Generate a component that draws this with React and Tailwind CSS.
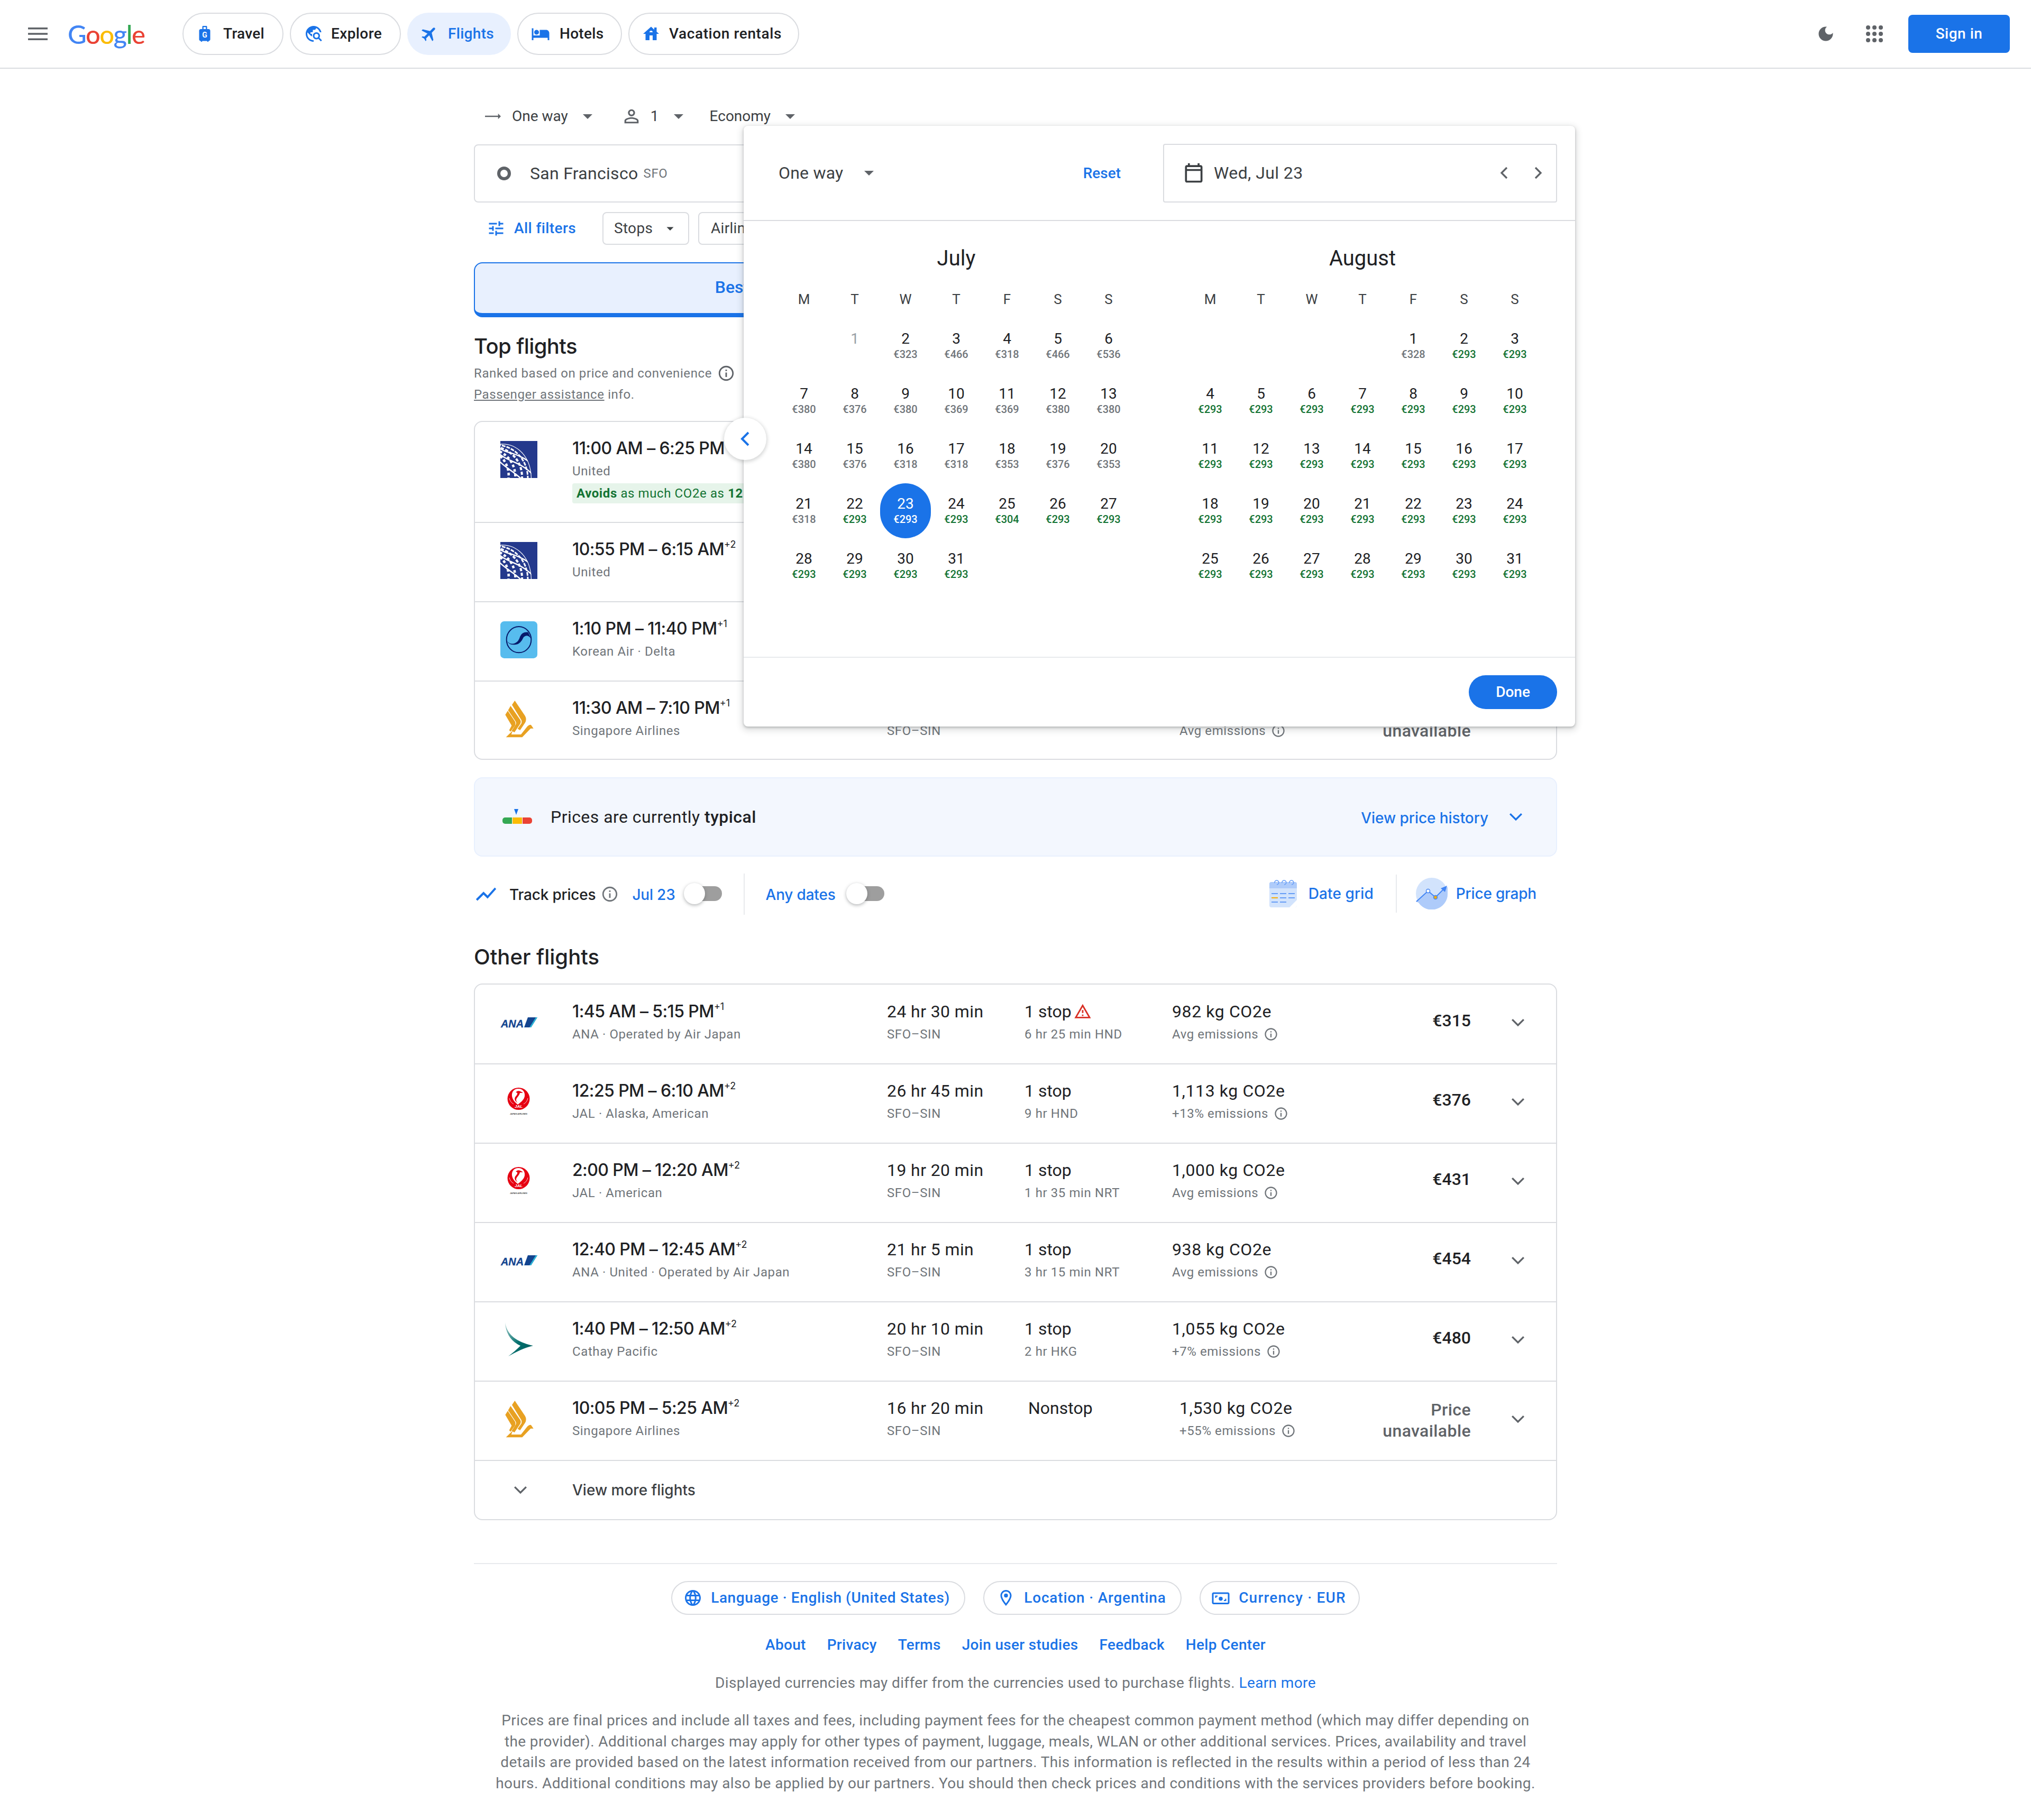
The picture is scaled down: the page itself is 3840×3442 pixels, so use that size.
import React from "react";

const Icon = ({ d, className = "", fill = "currentColor" }) => (
  <svg viewBox="0 0 24 24" className={className} fill={fill}>
    <path d={d} />
  </svg>
);

const paths = {
  luggage: "M17 6h-2V3c0-.55-.45-1-1-1h-4c-.55 0-1 .45-1 1v3H7c-1.1 0-2 .9-2 2v11c0 1.1.9 2 2 2 0 .55.45 1 1 1s1-.45 1-1h6c0 .55.45 1 1 1s1-.45 1-1c1.1 0 2-.9 2-2V8c0-1.1-.9-2-2-2zm-6.5 0V3.5h3V6h-3z",
  explore: "M19.3 16.9c.4-.7.7-1.5.7-2.4 0-2.5-2-4.5-4.5-4.5S11 12 11 14.5s2 4.5 4.5 4.5c.9 0 1.7-.3 2.4-.7l3.2 3.2 1.4-1.4-3.2-3.2zm-3.8.1c-1.4 0-2.5-1.1-2.5-2.5s1.1-2.5 2.5-2.5 2.5 1.1 2.5 2.5-1.1 2.5-2.5 2.5zM12 20v2C6.48 22 2 17.52 2 12S6.48 2 12 2c4.84 0 8.87 3.44 9.8 8h-2.07c-.64-2.46-2.4-4.47-4.73-5.41V5c0 1.1-.9 2-2 2h-2v2c0 .55-.45 1-1 1H8v2h2v3H9l-4.79-4.79C4.08 10.79 4 11.38 4 12c0 4.41 3.59 8 8 8z",
  flight: "M21 16v-2l-8-5V3.5c0-.83-.67-1.5-1.5-1.5S10 2.67 10 3.5V9l-8 5v2l8-2.5V19l-2 1.5V22l3.5-1 3.5 1v-1.5L13 19v-5.5l8 2.5z",
  hotel: "M7 13c1.66 0 3-1.34 3-3S8.66 7 7 7s-3 1.34-3 3 1.34 3 3 3zm12-6h-8v7H3V5H1v15h2v-3h18v3h2v-9c0-2.21-1.79-4-4-4z",
  house: "M19 9.3V4h-3v2.6L12 3 2 12h3v8h5v-6h4v6h5v-8h3l-3-2.7zm-9 .7c0-1.1.9-2 2-2s2 .9 2 2h-4z",
  moon: "M12 3c-4.97 0-9 4.03-9 9s4.03 9 9 9 9-4.03 9-9c0-.46-.04-.92-.1-1.36-.98 1.37-2.58 2.26-4.4 2.26-2.98 0-5.4-2.42-5.4-5.4 0-1.81.89-3.42 2.26-4.4-.44-.06-.9-.1-1.36-.1z",
  person: "M12 5.9c1.16 0 2.1.94 2.1 2.1s-.94 2.1-2.1 2.1S9.9 9.16 9.9 8s.94-2.1 2.1-2.1m0 9c2.97 0 6.1 1.46 6.1 2.1v1.1H5.9V17c0-.64 3.13-2.1 6.1-2.1M12 4C9.79 4 8 5.79 8 8s1.79 4 4 4 4-1.79 4-4-1.79-4-4-4zm0 9c-2.67 0-8 1.34-8 4v3h16v-3c0-2.66-5.33-4-8-4z",
  tune: "M3 17v2h6v-2H3zM3 5v2h10V5H3zm10 16v-2h8v-2h-8v-2h-2v6h2zM7 9v2H3v2h4v2h2V9H7zm14 4v-2H11v2h10zm-6-4h2V7h4V5h-4V3h-2v6z",
  info: "M11 7h2v2h-2zm0 4h2v6h-2zm1-9C6.48 2 2 6.48 2 12s4.48 10 10 10 10-4.48 10-10S17.52 2 12 2zm0 18c-4.41 0-8-3.59-8-8s3.59-8 8-8 8 3.59 8 8-3.59 8-8 8z",
  warning: "M12 5.99L19.53 19H4.47L12 5.99M12 2L1 21h22L12 2zm1 14h-2v2h2v-2zm0-6h-2v4h2v-4z",
  chart: "M3.5 18.49l6-6.01 4 4L22 6.92l-1.41-1.41-7.09 7.97-4-4L2 16.99z",
  globe: "M11.99 2C6.47 2 2 6.48 2 12s4.47 10 9.99 10C17.52 22 22 17.52 22 12S17.52 2 11.99 2zm6.93 6h-2.95c-.32-1.25-.78-2.45-1.38-3.56 1.84.63 3.37 1.91 4.33 3.56zM12 4.04c.83 1.2 1.48 2.53 1.91 3.96h-3.82c.43-1.43 1.08-2.76 1.91-3.96zM4.26 14C4.1 13.36 4 12.69 4 12s.1-1.36.26-2h3.38c-.08.66-.14 1.32-.14 2s.06 1.34.14 2H4.26zm.82 2h2.95c.32 1.25.78 2.45 1.38 3.56-1.84-.63-3.37-1.9-4.33-3.56zm2.95-8H5.08c.96-1.66 2.49-2.93 4.33-3.56C8.81 5.55 8.35 6.75 8.03 8zM12 19.96c-.83-1.2-1.48-2.53-1.91-3.96h3.82c-.43 1.43-1.08 2.76-1.91 3.96zM14.34 14H9.66c-.09-.66-.16-1.32-.16-2s.07-1.35.16-2h4.68c.09.65.16 1.32.16 2s-.07 1.34-.16 2zm.25 5.56c.6-1.11 1.06-2.31 1.38-3.56h2.95c-.96 1.65-2.49 2.93-4.33 3.56zM16.36 14c.08-.66.14-1.32.14-2s-.06-1.34-.14-2h3.38c.16.64.26 1.31.26 2s-.1 1.36-.26 2h-3.38z",
  pin: "M12 2C8.13 2 5 5.13 5 9c0 5.25 7 13 7 13s7-7.75 7-13c0-3.87-3.13-7-7-7zm0 2c2.76 0 5 2.24 5 5 0 2.88-2.88 7.19-5 9.88C9.92 16.21 7 11.85 7 9c0-2.76 2.24-5 5-5zm0 2.5A2.5 2.5 0 1 0 12 11.5 2.5 2.5 0 0 0 12 6.5z",
  currency: "M3 5h18c1.1 0 2 .9 2 2v11c0 1.1-.9 2-2 2H3c-1.1 0-2-.9-2-2V7c0-1.1.9-2 2-2zm0 2v11h18V7H3zm9 3.5a2.5 2.5 0 1 1 0 5 2.5 2.5 0 0 1 0-5zM5 9h3v1.5H6.5V12H5V9zm14 7h-3v-1.5h1.5V13H19v3z",
  calendar: "M19 4h-1V2h-2v2H8V2H6v2H5c-1.1 0-2 .9-2 2v14c0 1.1.9 2 2 2h14c1.1 0 2-.9 2-2V6c0-1.1-.9-2-2-2zm0 16H5V10h14v10zm0-12H5V6h14v2z",
  arrow: "M2 11.2h16.5V8.5L22 12l-3.5 3.5v-2.7H2z",
};

const Caret = ({ className = "" }) => (
  <svg viewBox="0 0 20 10" className={`w-[18px] h-[9px] ${className}`} fill="currentColor">
    <path d="M0 0h20L10 10z" />
  </svg>
);

const Chevron = ({ className = "", up = false }) => (
  <svg viewBox="0 0 24 24" className={className} fill="none" stroke="currentColor" strokeWidth="2">
    <path d={up ? "M6 15l6-6 6 6" : "M5.5 8.5 12 15l6.5-6.5"} />
  </svg>
);

const GS = "font-['Inter',sans-serif]";

const UnitedLogo = () => (
  <svg viewBox="0 0 70 70" className="w-[70px] h-[70px]">
    <defs>
      <clipPath id="unitedGlobe">
        <path d="M0 5.5C28 3 58 25 59 70H0z" />
      </clipPath>
    </defs>
    <rect width="70" height="70" fill="#24398c" />
    <g clipPath="url(#unitedGlobe)" fill="none" stroke="#fff">
      <path d="M0 5.5C28 3 58 25 59 70" strokeWidth="2.4" />
      <path d="M-6 7C26 10 52 34 52 72" strokeWidth="3" strokeDasharray="7 2" />
      <path d="M-8 11C20 16 43 38 41 74" strokeWidth="4" strokeDasharray="6 3" />
      <path d="M-10 17C12 22 31 44 28 74" strokeWidth="4.5" strokeDasharray="5 4" />
      <path d="M-8 24C6 30 19 50 15 74" strokeWidth="4.5" strokeDasharray="5 4" />
      <path d="M-4 12C10 24 28 20 56 40" strokeWidth="2.4" />
      <path d="M-4 22C10 38 36 38 60 62" strokeWidth="2.4" />
      <path d="M-4 36C8 50 24 56 42 74" strokeWidth="2.4" />
    </g>
  </svg>
);

const KoreanLogo = () => (
  <svg viewBox="48 42 210 210" className="w-[70px] h-[70px]">
    <rect x="48" y="42" width="210" height="210" rx="22" fill="#57bcee" />
    <ellipse cx="153" cy="146" rx="70" ry="74" fill="none" stroke="#071a6b" strokeWidth="6" />
    <path d="M84 152Q105 178 132 166Q152 156 160 128Q172 100 206 104L222 140Q200 112 180 132Q162 172 136 174Q100 180 84 152Z" fill="#071a6b" />
  </svg>
);

const SingaporeLogo = () => (
  <svg viewBox="48 492 210 210" className="w-[70px] h-[70px]" fill="#e8a122">
    <path d="M130 492L188 578Q200 598 188 618L160 660L146 652L168 620Q172 606 162 594L114 516Z" />
    <path d="M106 522L160 600Q168 612 160 625L128 672L112 664L136 626Q140 616 132 606L92 547Z" />
    <path d="M90 550L132 612Q136 622 132 632L106 668L98 660L112 634L76 572Z" />
    <path d="M80 700L118 662L110 684L165 684L200 640Q212 626 222 630L236 650L220 650L172 700Z" />
  </svg>
);

const AnaLogo = () => (
  <svg viewBox="0 0 70 70" className="w-[70px] h-[70px]">
    <text x="1" y="44" fontFamily="'Liberation Sans',sans-serif" fontStyle="italic" fontWeight="700" fontSize="21" textLength="43" lengthAdjust="spacingAndGlyphs" fill="#13448f" stroke="#13448f" strokeWidth="0.3">ANA</text>
    <path d="M52 25H70L58 44H45Z" fill="#13448f" />
    <path d="M67 25h3L58 44h-3z" fill="#29b6d8" />
  </svg>
);

const JalLogo = () => (
  <svg viewBox="0 0 70 70" className="w-[70px] h-[70px]">
    <circle cx="34.5" cy="29" r="21" fill="#e60012" />
    <path d="M34 10C26 10 21 16 22 24C23 31 28 36 33 40C38 36 45 31 46 24C47 16 42 10 34 10Z" fill="#fff" />
    <path d="M30 16C33 13 38 14 43 18L37 18C36 22 34 24 31 28C29 31 30 34 33 37C28 34 26 30 28 26C30 23 33 21 32 18C31 17 30 17 29 17Z" fill="#e60012" />
    <path d="M17 28c1 5 4 9 8 11M52 28c-1 5-4 9-8 11" stroke="#fff" strokeWidth="0.8" fill="none" />
    <text x="34.5" y="46" textAnchor="middle" fontFamily="'Liberation Sans',sans-serif" fontStyle="italic" fontWeight="700" fontSize="8" fill="#fff">JAL</text>
    <text x="34.5" y="59" textAnchor="middle" fontFamily="'Liberation Sans',sans-serif" fontStyle="italic" fontWeight="700" fontSize="4" fill="#444">JAPAN AIRLINES</text>
  </svg>
);

const CathayLogo = () => (
  <svg viewBox="0 0 70 70" className="w-[70px] h-[70px]">
    <defs>
      <linearGradient id="cathayWing" x1="0" y1="0" x2="1" y2="1">
        <stop offset="0" stopColor="#a6cfcd" />
        <stop offset="0.55" stopColor="#006e6c" />
        <stop offset="1" stopColor="#005a5c" />
      </linearGradient>
    </defs>
    <path d="M9 2C12 22 26 38 62 46C44 50 30 58 15 66C26 58 34 50 38 46C20 38 10 22 9 2Z" fill="url(#cathayWing)" />
  </svg>
);

const logos = {
  united: UnitedLogo,
  korean: KoreanLogo,
  singapore: SingaporeLogo,
  ana: AnaLogo,
  jal: JalLogo,
  cathay: CathayLogo,
};

const navItems = [
  { label: "Travel", icon: paths.luggage, pill: "w-[191px] pl-[22px] tracking-[0.3px]", gap: "gap-[17px]", active: false },
  { label: "Explore", icon: paths.explore, pill: "w-[210px] pl-[25px] tracking-[0.4px]", gap: "gap-[15px]", active: false },
  { label: "Flights", icon: paths.flight, pill: "w-[196px] pl-[24px] tracking-[0.3px]", gap: "gap-[17px]", active: true },
  { label: "Hotels", icon: paths.hotel, pill: "w-[198px] pl-[24px] tracking-[0.3px]", gap: "gap-[18px]", active: false },
  { label: "Vacation rentals", icon: paths.house, pill: "w-[323px] pl-[23px] tracking-[0.6px]", gap: "gap-[16px]", active: false },
];

const Header = () => (
  <header className="h-[130px] border-b-2 border-[#dadce0] flex items-center pr-[40px]">
    <svg viewBox="0 0 37 24" className="w-[37px] h-[24px] ml-[53px] text-[#5f6368]" fill="currentColor">
      <path d="M0 0h37v3.5H0zM0 10.2h37v3.5H0zM0 20.5h37V24H0z" />
    </svg>
    <div className="ml-[38px] w-[146px] text-[49px] leading-[60px] tracking-[-1.5px] font-['Lato',sans-serif] font-medium">
      <span className="text-[#4285f4]">G</span>
      <span className="text-[#ea4335]">o</span>
      <span className="text-[#fbbc05]">o</span>
      <span className="text-[#4285f4]">g</span>
      <span className="text-[#34a853]">l</span>
      <span className="text-[#ea4335]">e</span>
    </div>
    <nav className="ml-[71px] flex gap-[12px]">
      {navItems.map((item) => (
        <div
          key={item.label}
          className={`h-[80px] rounded-full flex items-center text-[28px] font-medium ${item.pill} ${item.gap} ${
            item.active ? "bg-[#e8f0fe] text-[#1a73e8]" : "border-2 border-[#dadce0] text-[#202124]"
          }`}
        >
          <span className="relative w-[36px] h-[36px] shrink-0 flex items-center justify-center text-[#1a73e8]">
            <Icon d={item.icon} className={`w-[36px] h-[36px] shrink-0 ${item.active ? "rotate-45" : ""}`} />
            {item.label === "Travel" && (
              <span className="absolute top-[12px] left-0 w-[36px] text-center text-[14px] leading-[16px] font-bold text-white tracking-normal">G</span>
            )}
          </span>
          {item.label}
        </div>
      ))}
    </nav>
    <div className="ml-auto flex items-center">
      <Icon d={paths.moon} className="w-[36px] h-[36px] text-[#5f6368]" />
      <svg viewBox="0 0 32 32" className="ml-[58px] w-[32px] h-[32px] text-[#5f6368]" fill="currentColor">
        {[4, 16, 28].map((y) =>
          [4, 16, 28].map((x) => <circle key={`${x}-${y}`} cx={x} cy={y} r="4" />)
        )}
      </svg>
      <div className="ml-[48px] w-[192px] h-[72px] rounded-[8px] bg-[#1a73e8] text-white text-[28px] font-medium tracking-[0.5px] flex items-center justify-center">
        Sign in
      </div>
    </div>
  </header>
);

const SearchControls = () => (
  <>
    <div className="h-[58px] pt-[2px] flex items-center text-[28px] text-[#3c4043]">
      <Icon d={paths.arrow} className="ml-[18px] w-[36px] h-[36px] text-[#5f6368]" />
      <span className="ml-[18px]">One way</span>
      <Caret className="ml-[28px] text-[#5f6368]" />
      <Icon d={paths.person} className="ml-[54px] w-[40px] h-[40px] text-[#5f6368]" />
      <span className="ml-[16px]">1</span>
      <Caret className="ml-[28px] text-[#5f6368]" />
      <span className="ml-[50px]">Economy</span>
      <Caret className="ml-[28px] text-[#5f6368]" />
    </div>
    <div className="mt-[25px] h-[110px] border-2 border-[#dadce0] rounded-[8px] flex items-center">
      <span className="ml-[42px] w-[26px] h-[26px] rounded-full border-[6px] border-[#5f6368]" />
      <span className="ml-[36px] text-[32px] tracking-[0.3px] text-[#3c4043]">San Francisco</span>
      <span className="ml-[10px] text-[24px] tracking-[0.6px] text-[#70757a]">SFO</span>
    </div>
    <div className="mt-[17px] h-[64px] flex items-center">
      <Icon d={paths.tune} className="ml-[24px] w-[36px] h-[36px] text-[#1a73e8]" />
      <span className="ml-[16px] text-[28px] font-medium tracking-[0.4px] text-[#1a73e8]">All filters</span>
      <div className="ml-[50px] w-[164px] h-[62px] border-2 border-[#dadce0] rounded-[8px] flex items-center pl-[20px] text-[28px] tracking-[0.3px] text-[#3c4043]">
        Stops
        <Caret className="ml-[24px] scale-75 text-[#3c4043]" />
      </div>
      <div className="ml-[17px] w-[164px] h-[62px] border-2 border-[#dadce0] rounded-[8px] flex items-center pl-[22px] text-[28px] tracking-[0.3px] text-[#3c4043]">
        Airlines
      </div>
    </div>
    <div className="mt-[32px] w-[1024px] h-[104px] bg-[#e8f0fe] border-2 border-b-[8px] border-[#1a73e8] rounded-[16px] flex items-center justify-center pb-[4px] text-[32px] font-medium text-[#1a73e8] pr-[48px]">
      Best
    </div>
  </>
);

const FlightRow = ({ f, first, firstClass }) => {
  const Logo = logos[f.logo];
  const height = f.height || "h-[150px]";
  return (
    <div className={`flex items-start ${height} ${first ? firstClass : "border-t-2 border-[#dadce0] pt-[30px]"}`}>
      <div className="ml-[48px] mt-[6px] w-[70px] h-[70px] shrink-0">
        <Logo />
      </div>
      <div className="ml-[66px] w-[595px] shrink-0">
        <div className={`${GS} h-[40px] text-[32px] leading-[40px] font-medium text-[#202124] tracking-[-0.6px] whitespace-nowrap`}>
          {f.time}
          {f.plus && <sup className="text-[18px] leading-none relative -top-[2px] align-super font-normal tracking-normal">{f.plus}</sup>}
        </div>
        <div className="mt-[7px] h-[32px] text-[24px] leading-[32px] tracking-[0.6px] text-[#70757a]">{f.airline}</div>
        {f.badge && (
          <div className="mt-[7px] w-[520px] h-[38px] bg-[#e6f4ea] rounded-[4px] px-[8px] text-[24px] leading-[38px] tracking-[0.6px] text-[#137333] whitespace-nowrap">
            <span className="font-bold">Avoids</span> as much CO2e as <span className="font-bold">12</span>
          </div>
        )}
      </div>
      <div className="w-[260px] shrink-0">
        <div className="h-[40px] text-[32px] leading-[40px] tracking-[0.4px] text-[#202124]">{f.duration}</div>
        <div className="mt-[7px] h-[32px] text-[24px] leading-[32px] tracking-[0.6px] text-[#70757a]">{f.route}</div>
      </div>
      <div className={`w-[279px] shrink-0 ${f.nonstop ? "pl-[7px]" : ""}`}>
        <div className="h-[40px] text-[32px] leading-[40px] text-[#202124] flex items-center">
          {f.stops}
          {f.warn && <Icon d={paths.warning} className="ml-[4px] w-[34px] h-[34px] text-[#d93025]" />}
        </div>
        <div className="mt-[7px] h-[32px] text-[24px] leading-[32px] tracking-[0.6px] text-[#70757a]">{f.layover}</div>
      </div>
      <div className={`flex-1 ${f.nonstop ? "pl-[14px]" : ""}`}>
        <div className="h-[40px] text-[32px] leading-[40px] tracking-[0.6px] text-[#202124]">{f.co2}</div>
        <div className="mt-[7px] h-[32px] text-[24px] leading-[32px] tracking-[0.6px] text-[#70757a] flex items-center">
          {f.emissions}
          {f.emissions && <Icon d={paths.info} className="ml-[10px] w-[28px] h-[28px] text-[#70757a]" />}
        </div>
      </div>
      {f.unavailable ? (
        <div className="pt-[3px] text-right text-[32px] leading-[40px] tracking-[0.4px] font-medium text-[#5f6368]">
          <div>Price</div>
          <div>unavailable</div>
        </div>
      ) : (
        <div className="mt-[17px] text-right text-[32px] leading-[40px] font-medium text-[#202124]">{f.price}</div>
      )}
      <div className="ml-[53px] mr-[36px] mt-[21px] w-[72px] h-[40px] flex items-center justify-center text-[#5f6368]">
        <Chevron className="w-[40px] h-[40px]" />
      </div>
    </div>
  );
};

const topFlights = [
  { logo: "united", height: "h-[189px]", time: "11:00 AM – 6:25 PM", airline: "United", badge: true },
  { logo: "united", time: "10:55 PM – 6:15 AM", plus: "+2", airline: "United" },
  { logo: "korean", time: "1:10 PM – 11:40 PM", plus: "+1", airline: "Korean Air · Delta" },
  { logo: "singapore", height: "h-[148px]", time: "11:30 AM – 7:10 PM", plus: "+1", airline: "Singapore Airlines", route: "SFO–SIN", stops: "Nonstop", nonstop: true, emissions: "Avg emissions", unavailable: true },
];

const otherFlights = [
  { logo: "ana", height: "h-[149px]", time: "1:45 AM – 5:15 PM", plus: "+1", airline: "ANA · Operated by Air Japan", duration: "24 hr 30 min", route: "SFO–SIN", stops: "1 stop", warn: true, layover: "6 hr 25 min HND", co2: "982 kg CO2e", emissions: "Avg emissions", price: "€315" },
  { logo: "jal", time: "12:25 PM – 6:10 AM", plus: "+2", airline: "JAL · Alaska, American", duration: "26 hr 45 min", route: "SFO–SIN", stops: "1 stop", layover: "9 hr HND", co2: "1,113 kg CO2e", emissions: "+13% emissions", price: "€376" },
  { logo: "jal", time: "2:00 PM – 12:20 AM", plus: "+2", airline: "JAL · American", duration: "19 hr 20 min", route: "SFO–SIN", stops: "1 stop", layover: "1 hr 35 min NRT", co2: "1,000 kg CO2e", emissions: "Avg emissions", price: "€431" },
  { logo: "ana", time: "12:40 PM – 12:45 AM", plus: "+2", airline: "ANA · United · Operated by Air Japan", duration: "21 hr 5 min", route: "SFO–SIN", stops: "1 stop", layover: "3 hr 15 min NRT", co2: "938 kg CO2e", emissions: "Avg emissions", price: "€454" },
  { logo: "cathay", time: "1:40 PM – 12:50 AM", plus: "+2", airline: "Cathay Pacific", duration: "20 hr 10 min", route: "SFO–SIN", stops: "1 stop", layover: "2 hr HKG", co2: "1,055 kg CO2e", emissions: "+7% emissions", price: "€480" },
  { logo: "singapore", time: "10:05 PM – 5:25 AM", plus: "+2", airline: "Singapore Airlines", duration: "16 hr 20 min", route: "SFO–SIN", stops: "Nonstop", nonstop: true, co2: "1,530 kg CO2e", emissions: "+55% emissions", unavailable: true },
];

const TopFlights = () => (
  <section>
    <h2 className={`${GS} mt-[31px] h-[48px] text-[40px] leading-[48px] font-medium text-[#202124] tracking-[-0.6px]`}>Top flights</h2>
    <div className="mt-[7px] h-[40px] flex items-center text-[24px] tracking-[0.6px] text-[#70757a]">
      Ranked based on price and convenience
      <Icon d={paths.info} className="ml-[10px] w-[34px] h-[34px] text-[#5f6368]" />
    </div>
    <div className="h-[40px] flex items-center text-[24px] tracking-[0.6px] text-[#70757a] whitespace-pre">
      <span className="underline">Passenger assistance</span> info.
    </div>
    <div className="mt-[30px] border-2 border-[#dadce0] rounded-[16px] overflow-hidden">
      {topFlights.map((f, i) => (
        <FlightRow key={i} f={f} first={i === 0} firstClass="pt-[30px]" />
      ))}
    </div>
  </section>
);

const PriceBanner = () => (
  <div className="mt-[33px] h-[150px] bg-[#f3f7fe] border-2 border-[#e8f0fe] rounded-[16px] flex items-center">
    <svg viewBox="0 0 56 30" className="ml-[52px] w-[56px] h-[30px]">
      <path d="M22 0h8l-4 11z" fill="#1a73e8" />
      <path d="M5 16h13v12H5a5 5 0 0 1-5-5v-2a5 5 0 0 1 5-5z" fill="#34a853" />
      <rect x="19" y="16" width="18" height="12" fill="#fbbc04" />
      <path d="M38 16h13a5 5 0 0 1 5 5v2a5 5 0 0 1-5 5H38z" fill="#ea4335" />
    </svg>
    <span className="ml-[35px] text-[32px] tracking-[0.45px] text-[#202124]">
      Prices are currently <span className="font-medium">typical</span>
    </span>
    <span className={`${GS} ml-auto pt-[4px] text-[28px] font-medium tracking-[-0.05px] text-[#1a73e8]`}>View price history</span>
    <Chevron className="ml-[32px] mr-[56px] w-[40px] h-[40px] text-[#1a73e8]" />
  </div>
);

const Toggle = ({ className = "" }) => (
  <div className={`relative w-[72px] h-[28px] -mt-[3px] ${className}`}>
    <div className="absolute right-0 top-0 w-[52px] h-[28px] rounded-full bg-[#9e9e9e]" />
    <div className="absolute left-0 top-[-6px] w-[40px] h-[40px] rounded-full bg-white shadow-[0_2px_6px_rgba(60,64,67,0.4)]" />
  </div>
);

const TrackRow = () => (
  <div className={`${GS} mt-[32px] h-[78px] flex items-center text-[28px] font-medium tracking-[-0.2px]`}>
    <Icon d={paths.chart} className="w-[46px] h-[46px] text-[#1a73e8]" />
    <span className="ml-[21px] pt-[2px] text-[#202124]">Track prices</span>
    <Icon d={paths.info} className="ml-[10px] w-[34px] h-[34px] text-[#70757a]" />
    <span className="ml-[25px] pt-[2px] text-[#1a73e8]">Jul 23</span>
    <Toggle className="ml-[16px]" />
    <div className="ml-[41px] w-[2px] self-stretch bg-[#e8eaed]" />
    <span className="ml-[40px] pt-[2px] text-[#1a73e8]">Any dates</span>
    <Toggle className="ml-[20px]" />
    <div className="ml-auto flex items-center -mt-[3px]">
      <svg viewBox="0 0 52 52" className="w-[52px] h-[52px]">
        <rect x="0" y="4" width="52" height="48" rx="4" fill="#d2e3fc" />
        <path d="M0 8a4 4 0 0 1 4-4h44a4 4 0 0 1 4 4v8H0z" fill="#aecbfa" />
        <path d="M10 6a4 4 0 1 1 4 3M24 6a4 4 0 1 1 4 3M38 6a4 4 0 1 1 4 3" fill="none" stroke="#669df6" strokeWidth="1.5" />
        <path d="M4 26h12M20 26h12M36 26h12M20 34h12M36 34h12M4 42h12M20 42h12" stroke="#669df6" strokeWidth="2" />
        <path d="M4 34h12" stroke="#f9ab00" strokeWidth="2" />
        <path d="M38 52l14-14v10a4 4 0 0 1-4 4z" fill="#fff" />
      </svg>
      <span className="ml-[22px] tracking-[0.1px] text-[#1a73e8]">Date grid</span>
      <div className="ml-[42px] w-[2px] h-[72px] bg-[#e8eaed]" />
      <svg viewBox="0 0 60 60" className="ml-[36px] w-[60px] h-[60px]">
        <circle cx="30" cy="30" r="30" fill="#d2e3fc" />
        <path d="M0 45L23 25l14 12L60 17v13A30 30 0 0 1 5 47z" fill="#aecbfa" />
        <path d="M1 45l22-20 14 12 18-18" fill="none" stroke="#4285f4" strokeWidth="2" />
        <path d="M47 20l12-5-4 12z" fill="#4285f4" />
        <circle cx="23" cy="25" r="3.5" fill="#fff" stroke="#4285f4" strokeWidth="1.5" />
        <circle cx="37" cy="37" r="3.5" fill="#f9ab00" stroke="#4285f4" strokeWidth="1.5" />
      </svg>
      <span className="ml-[16px] mr-[39px] text-[#1a73e8]">Price graph</span>
    </div>
  </div>
);

const OtherFlights = () => (
  <section>
    <h2 className={`${GS} mt-[56px] h-[48px] text-[40px] leading-[48px] font-medium text-[#202124]`}>Other flights</h2>
    <div className="mt-[26px] border-2 border-[#dadce0] rounded-[16px] overflow-hidden">
      {otherFlights.map((f, i) => (
        <FlightRow key={i} f={f} first={i === 0} firstClass="pt-[31px]" />
      ))}
      <div className="h-[112px] border-t-2 border-[#dadce0] flex items-center">
        <Chevron className="ml-[66px] w-[40px] h-[40px] text-[#5f6368]" />
        <span className={`${GS} ml-[78px] text-[28px] font-medium tracking-[0px] text-[#3c4043]`}>View more flights</span>
      </div>
    </div>
  </section>
);

const footerChips = [
  { label: "Language · English (United States)", icon: paths.globe, pill: "w-[556px] pr-[6px] tracking-[0.6px]" },
  { label: "Location · Argentina", icon: paths.pin, pill: "w-[375px] pr-[4px] tracking-[0.8px]" },
  { label: "Currency · EUR", icon: paths.currency, pill: "w-[303px] pr-[4px] tracking-[1.2px]" },
];

const footerLinks = ["About", "Privacy", "Terms", "Join user studies", "Feedback", "Help Center"];

const Footer = () => (
  <footer className="mt-[81px] border-t-2 border-[#e8eaed] pt-[32px]">
    <div className="flex justify-center gap-[34px]">
      {footerChips.map((chip) => (
        <div
          key={chip.label}
          className={`h-[64px] border-2 border-[#dadce0] rounded-full flex items-center justify-center gap-[16px] text-[28px] font-medium text-[#1a73e8] ${chip.pill}`}
        >
          <Icon d={chip.icon} className="w-[36px] h-[36px] shrink-0" />
          {chip.label}
        </div>
      ))}
    </div>
    <div className="mt-[37px] h-[40px] flex justify-center gap-[40px] text-[28px] leading-[40px] tracking-[0.3px] font-medium text-[#1a73e8]">
      {footerLinks.map((link) => (
        <span key={link}>{link}</span>
      ))}
    </div>
    <p className="mt-[32px] h-[40px] text-center text-[28px] leading-[40px] tracking-[0.38px] text-[#70757a]">
      Displayed currencies may differ from the currencies used to purchase flights. <span className="text-[#1a73e8]">Learn more</span>
    </p>
    <p className="mt-[31px] px-[32px] text-center text-[28px] leading-[39.6px] tracking-[0.38px] text-[#70757a]">
      Prices are final prices and include all taxes and fees, including payment fees for the cheapest common payment method (which may differ depending on the provider). Additional charges may apply for other types of payment, luggage, meals, WLAN or other additional services. Prices, availability and travel details are provided based on the latest information received from our partners. This information is reflected in the results within a period of less than 24 hours. Additional conditions may also be applied by our partners. You should then check prices and conditions with the services providers before booking.
    </p>
  </footer>
);

const julyDays = [
  null,
  { d: 1, off: true },
  { d: 2, p: 323 }, { d: 3, p: 466 }, { d: 4, p: 318 }, { d: 5, p: 466 }, { d: 6, p: 536 },
  { d: 7, p: 380 }, { d: 8, p: 376 }, { d: 9, p: 380 }, { d: 10, p: 369 }, { d: 11, p: 369 }, { d: 12, p: 380 }, { d: 13, p: 380 },
  { d: 14, p: 380 }, { d: 15, p: 376 }, { d: 16, p: 318 }, { d: 17, p: 318 }, { d: 18, p: 353 }, { d: 19, p: 376 }, { d: 20, p: 353 },
  { d: 21, p: 318 }, { d: 22, p: 293, low: true }, { d: 23, p: 293, sel: true }, { d: 24, p: 293, low: true }, { d: 25, p: 304, low: true }, { d: 26, p: 293, low: true }, { d: 27, p: 293, low: true },
  { d: 28, p: 293, low: true }, { d: 29, p: 293, low: true }, { d: 30, p: 293, low: true }, { d: 31, p: 293, low: true },
];
const augustDays = [
  null, null, null, null,
  { d: 1, p: 328 },
  ...Array.from({ length: 30 }, (_, i) => ({ d: i + 2, p: 293, low: true })),
];

const Month = ({ name, days }) => (
  <div className="w-[672px]">
    <div className="h-[48px] text-center text-[40px] leading-[48px] text-[#202124]">{name}</div>
    <div className="mt-[33px] grid grid-cols-7 h-[40px] text-center text-[26px] leading-[40px] text-[#3c4043]">
      {["M", "T", "W", "T", "F", "S", "S"].map((w, i) => (
        <div key={i}>{w}</div>
      ))}
    </div>
    <div className="mt-[16px] grid grid-cols-7 auto-rows-[104px]">
      {days.map((c, i) =>
        c ? (
          <div key={i} className="flex justify-center">
            <div className={`w-[104px] h-[104px] rounded-full pt-[21px] text-center ${c.sel ? "bg-[#1a73e8] text-white" : ""}`}>
              <div className={`h-[36px] text-[28px] leading-[36px] ${c.off ? "text-[#9aa0a6]" : c.sel ? "" : "text-[#202124]"}`}>{c.d}</div>
              {c.p && <div className={`-mt-[1px] h-[24px] text-[20px] leading-[24px] font-medium ${c.sel ? "" : c.low ? "text-[#137333]" : "text-[#70757a]"}`}>€{c.p}</div>}
            </div>
          </div>
        ) : (
          <div key={i} />
        )
      )}
    </div>
  </div>
);

const DatePopup = () => (
  <div className="absolute left-[510px] top-[108px] w-[1572px] h-[1136px] bg-white rounded-[8px] shadow-[0_4px_12px_4px_rgba(60,64,67,0.15),0_2px_4px_rgba(60,64,67,0.3)] flex flex-col">
    <div className="h-[180px] border-b-2 border-[#dadce0] flex items-center">
      <span className="ml-[66px] text-[32px] tracking-[0.2px] text-[#3c4043]">One way</span>
      <Caret className="ml-[40px] text-[#5f6368]" />
      <span className="ml-auto pt-[2px] text-[28px] font-medium text-[#1a73e8]">Reset</span>
      <div className="ml-[80px] mr-[34px] w-[745px] h-[111px] border-2 border-[#dadce0] rounded-[4px] flex items-center">
        <Icon d={paths.calendar} className="ml-[34px] w-[44px] h-[44px] text-[#3c4043]" />
        <span className="ml-[16px] text-[32px] tracking-[0.4px] text-[#3c4043]">Wed, Jul 23</span>
        <Chevron up className="ml-auto -rotate-90 w-[40px] h-[40px] text-[#5f6368]" />
        <Chevron up className="ml-[24px] mr-[14px] rotate-90 w-[40px] h-[40px] text-[#5f6368]" />
      </div>
    </div>
    <div className="flex-1 pt-[47px] pl-[66px] flex gap-[96px]">
      <Month name="July" days={julyDays} />
      <Month name="August" days={augustDays} />
    </div>
    <div className="h-[132px] border-t-2 border-[#e8eaed] flex items-center justify-end pr-[34px]">
      <div className="w-[167px] h-[64px] rounded-full bg-[#1a73e8] text-white text-[28px] font-medium flex items-center justify-center">Done</div>
    </div>
  </div>
);

const PrevButton = () => (
  <div className="absolute left-[473px] top-[660px] w-[80px] h-[80px] rounded-full bg-white shadow-[0_2px_6px_2px_rgba(60,64,67,0.2)] flex items-center justify-center text-[#1a73e8]">
    <Chevron up className="-rotate-90 w-[48px] h-[48px]" />
  </div>
);

export default function App() {
  return (
    <div className="min-h-[3442px] bg-white font-['Roboto',sans-serif]">
      <Header />
      <main className="relative w-[2048px] mx-auto pt-[60px]">
        <SearchControls />
        <TopFlights />
        <PriceBanner />
        <TrackRow />
        <OtherFlights />
        <Footer />
        <DatePopup />
        <PrevButton />
      </main>
    </div>
  );
}
